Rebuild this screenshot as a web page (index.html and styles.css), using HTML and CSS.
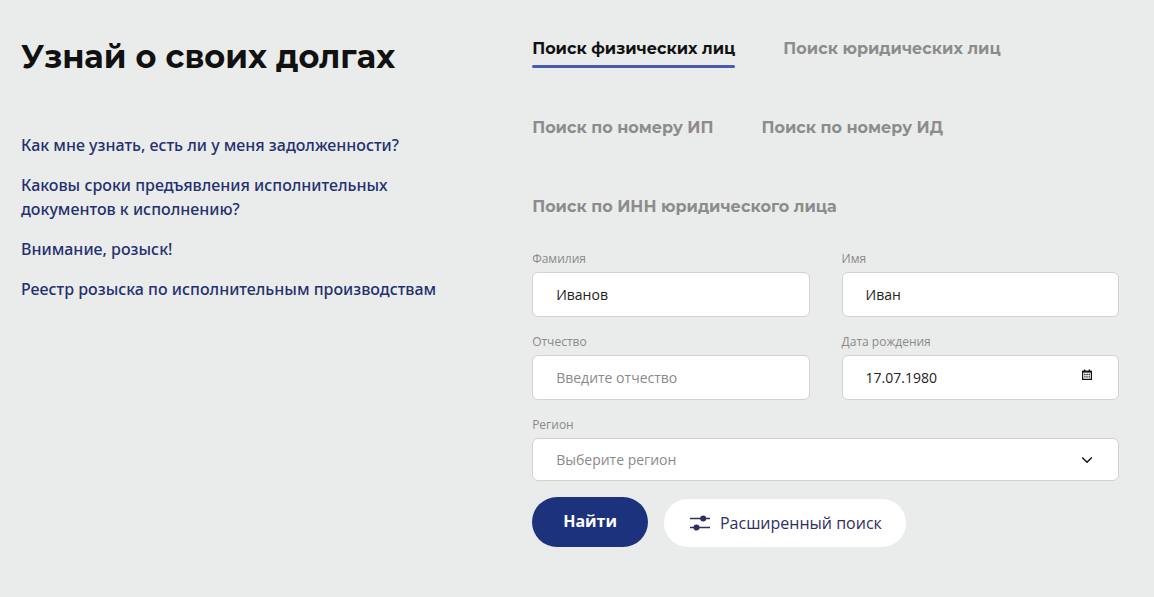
FILE: index.html
```
<!DOCTYPE html>
<html lang="ru">
<head>
<meta charset="utf-8">
<meta name="viewport" content="width=device-width, initial-scale=1">
<title>Узнай о своих долгах</title>
<link rel="stylesheet" href="styles.css">
</head>
<body>
<main class="debts">
  <section class="intro">
    <h1 class="intro-title">Узнай о своих долгах</h1>
    <nav class="faq">
      <a class="faq-link" href="#debt">Как мне узнать, есть ли у меня задолженности?</a>
      <a class="faq-link" href="#terms">Каковы сроки предъявления исполнительных документов к исполнению?</a>
      <a class="faq-link" href="#wanted">Внимание, розыск!</a>
      <a class="faq-link" href="#registry">Реестр розыска по исполнительным производствам</a>
    </nav>
  </section>
  <section class="search">
    <div class="tabs" role="tablist">
      <button class="tab tab-active" type="button" role="tab" aria-selected="true">Поиск физических лиц</button>
      <button class="tab" type="button" role="tab" aria-selected="false">Поиск юридических лиц</button>
      <button class="tab" type="button" role="tab" aria-selected="false">Поиск по номеру ИП</button>
      <button class="tab" type="button" role="tab" aria-selected="false">Поиск по номеру ИД</button>
      <button class="tab" type="button" role="tab" aria-selected="false">Поиск по ИНН юридического лица</button>
    </div>
    <form class="form">
      <div class="field">
        <label class="label" for="surname">Фамилия</label>
        <input class="control" id="surname" type="text" value="Иванов">
      </div>
      <div class="field">
        <label class="label" for="name">Имя</label>
        <input class="control" id="name" type="text" value="Иван">
      </div>
      <div class="field">
        <label class="label" for="patronymic">Отчество</label>
        <input class="control" id="patronymic" type="text" placeholder="Введите отчество">
      </div>
      <div class="field">
        <label class="label" for="birth">Дата рождения</label>
        <div class="control-box">
          <input class="control" id="birth" type="text" value="17.07.1980">
          <button class="calendar" type="button" aria-label="Открыть календарь">
            <svg width="10" height="12" viewBox="0 0 10 12" fill="none" stroke="#111">
              <path d="M.6 2.5h8.8v7.9H.6z" stroke-width="1.2"/>
              <path d="M.3 2.6h9.4" stroke-width="2"/>
              <path d="M2.6 .4v2M7.4 .4v2" stroke-width="1.4"/>
              <path d="M2.2 5.5h1.3M4.4 5.5h1.3M6.6 5.5h1.3M2.2 7.9h1.3M4.4 7.9h1.3M6.6 7.9h1.3" stroke-width="1.3"/>
            </svg>
          </button>
        </div>
      </div>
      <div class="field field-wide">
        <label class="label" for="region">Регион</label>
        <div class="control-box">
          <select class="control control-select" id="region">
            <option>Выберите регион</option>
          </select>
          <svg class="chevron" width="12" height="8" viewBox="0 0 12 8" fill="none" stroke="#111" stroke-width="1.4"><path d="M1.2 1.5 6 6.3l4.8-4.8"/></svg>
        </div>
      </div>
      <div class="actions field-wide">
        <button class="submit" type="submit">Найти</button>
        <button class="advanced" type="button">
          <svg width="20" height="16" viewBox="0 0 20 16" fill="#312e62" stroke="#312e62" stroke-width="1.5">
            <path d="M0 3.5h20M0 12.5h20"/>
            <circle cx="13.2" cy="3.5" r="2.3"/>
            <circle cx="6.5" cy="12.5" r="2.3"/>
          </svg>
          Расширенный поиск
        </button>
      </div>
    </form>
  </section>
</main>
</body>
</html>
```
FILE: styles.css
```
* {
  box-sizing: border-box;
}

body {
  margin: 0;
  background: #eaeceb;
  color: #111;
  font-family: "Open Sans", "Noto Sans", sans-serif;
}

button,
input,
select {
  margin: 0;
  font-family: inherit;
}

button {
  padding: 0;
  border: 0;
  background: none;
  cursor: pointer;
}

.debts {
  display: grid;
  grid-template-columns: 9fr 11fr;
  gap: 31px;
  padding: 37px 35px 50px 21px;
}

.intro {
  padding-right: 32px;
}

.intro-title {
  margin: 0 0 56px;
  font: 700 32px/40px Montserrat, Inter, sans-serif;
}

.faq {
  display: flex;
  flex-direction: column;
  align-items: flex-start;
  gap: 16px;
}

.faq-link {
  color: #25316f;
  font: 500 16px/24px "Noto Sans", sans-serif;
  text-decoration: none;
}

.tabs {
  display: flex;
  flex-wrap: wrap;
  gap: 48px;
}

.tab {
  color: #8c8c8c;
  font: 700 16px/24px Montserrat, Inter, sans-serif;
}

.tab::after {
  content: "";
  display: block;
  height: 3px;
  margin-top: 4px;
  border-radius: 2px;
}

.tab-active {
  color: #111;
}

.tab-active::after {
  background: #465cae;
}

.form {
  display: grid;
  grid-template-columns: 1fr 1fr;
  gap: 16px 32px;
  margin-top: 24px;
}

.field {
  display: flex;
  flex-direction: column;
  gap: 4px;
}

.field-wide {
  grid-column: 1 / -1;
}

.label {
  color: #8a8a8a;
  font-size: 12px;
  line-height: 18px;
}

.control {
  width: 100%;
  height: 45px;
  padding: 0 23px;
  border: 1px solid #d2d2d2;
  border-radius: 6px;
  background: #fff;
  color: #222;
  font-size: 14px;
}

.control::placeholder {
  color: #8a8a8a;
  opacity: 1;
}

.control-box {
  display: grid;
  align-items: center;
}

.control-box > * {
  grid-area: 1 / 1;
}

.control-select {
  height: 43px;
  appearance: none;
  color: #8a8a8a;
}

.calendar {
  display: flex;
  justify-self: end;
  margin: 0 27px 6px 0;
}

.chevron {
  justify-self: end;
  margin-right: 26px;
  pointer-events: none;
}

.actions {
  display: flex;
  align-items: flex-end;
  gap: 16px;
}

.submit {
  padding: 12px 31px 14px;
  border-radius: 25px;
  background: #1d327c;
  color: #fff;
  font-size: 16px;
  font-weight: 700;
  line-height: 24px;
}

.advanced {
  display: flex;
  align-items: center;
  gap: 10px;
  padding: 12px 24px 12px 26px;
  border-radius: 24px;
  background: #fff;
  color: #312e62;
  font-size: 16px;
  line-height: 24px;
}
```
